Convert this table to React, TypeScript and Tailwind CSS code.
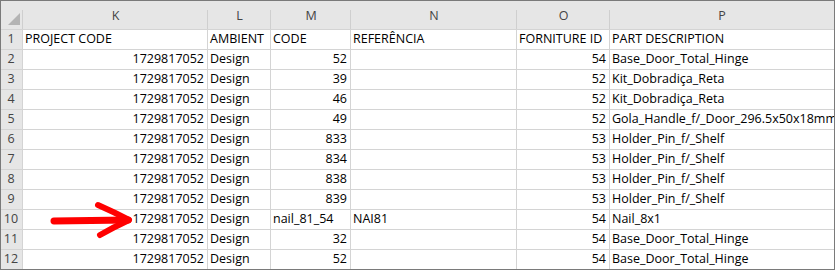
const cols = [
  { letter: "K", w: "w-[185px]", align: "right" },
  { letter: "L", w: "w-[63px]", align: "left" },
  { letter: "M", w: "w-[80px]", align: "right" },
  { letter: "N", w: "w-[166px]", align: "left" },
  { letter: "O", w: "w-[93px]", align: "right" },
  { letter: "P", w: "w-[224px]", align: "left" },
];

const header = ["PROJECT CODE", "AMBIENT", "CODE", "REFERÊNCIA", "FORNITURE ID", "PART DESCRIPTION"];

const rows: (string | { text: string; left: true })[][] = [
  ["1729817052", "Design", "52", "", "54", "Base_Door_Total_Hinge"],
  ["1729817052", "Design", "39", "", "52", "Kit_Dobradiça_Reta"],
  ["1729817052", "Design", "46", "", "52", "Kit_Dobradiça_Reta"],
  ["1729817052", "Design", "49", "", "52", "Gola_Handle_f/_Door_296.5x50x18mm"],
  ["1729817052", "Design", "833", "", "53", "Holder_Pin_f/_Shelf"],
  ["1729817052", "Design", "834", "", "53", "Holder_Pin_f/_Shelf"],
  ["1729817052", "Design", "838", "", "53", "Holder_Pin_f/_Shelf"],
  ["1729817052", "Design", "839", "", "53", "Holder_Pin_f/_Shelf"],
  ["1729817052", "Design", { text: "nail_81_54", left: true }, "NAI81", "54", "Nail_8x1"],
  ["1729817052", "Design", "32", "", "54", "Base_Door_Total_Hinge"],
  ["1729817052", "Design", "52", "", "54", "Base_Door_Total_Hinge"],
];

function Cell({ idx, value, forceLeft, last }: { idx: number; value: string; forceLeft?: boolean; last: boolean }) {
  const col = cols[idx];
  const right = col.align === "right" && !forceLeft;
  return (
    <div
      className={`${col.w} shrink-0 h-full overflow-hidden whitespace-nowrap flex items-center ${
        right ? "justify-end pr-[3px]" : "justify-start pl-[2px]"
      } ${idx < cols.length - 1 ? "border-r border-[#d4d4d4]" : ""} ${last ? "" : ""}`}
    >
      {value}
    </div>
  );
}

export default function App() {
  return (
    <div
      className="relative w-[835px] h-[270px] bg-white border border-[#7a7a7a] overflow-hidden text-[12.5px] text-black"
      style={{ fontFamily: '"Open Sans", "Liberation Sans", sans-serif' }}
    >
      {/* column letters */}
      <div className="flex h-[29px] bg-[#e6e6e6] border-b border-[#d4d4d4] text-[#444]">
        <div className="relative w-[22px] shrink-0 h-full after:absolute after:right-0 after:top-[9px] after:bottom-0 after:w-px after:bg-[#cfcfcf]">
          <svg className="absolute left-[7px] top-[12px]" width="12" height="12" viewBox="0 0 12 12">
            <polygon points="12,0 12,12 0,12" fill="#b4b4b4" />
          </svg>
        </div>
        {cols.map((c, i) => (
          <div
            key={c.letter}
            className={`relative ${c.w} shrink-0 h-full flex items-end justify-center pb-[3px] ${
              i < cols.length - 1
                ? "after:absolute after:right-0 after:top-[9px] after:bottom-0 after:w-px after:bg-[#cfcfcf]"
                : ""
            }`}
          >
            {c.letter}
          </div>
        ))}
      </div>

      {/* header row 1 */}
      <div className="flex h-[20px] border-b border-[#d4d4d4]">
        <div className="w-[22px] shrink-0 h-full bg-[#e6e6e6] border-r border-[#d4d4d4] flex items-center justify-center text-[#444] pr-[1px]">
          1
        </div>
        {header.map((h, i) => (
          <div
            key={h}
            className={`${cols[i].w} shrink-0 h-full overflow-hidden whitespace-nowrap flex items-center pl-[2px] ${
              i < cols.length - 1 ? "border-r border-[#d4d4d4]" : ""
            }`}
          >
            {h}
          </div>
        ))}
      </div>

      {rows.map((r, ri) => {
        const last = ri === rows.length - 1;
        return (
          <div key={ri} className={`flex ${last ? "h-[19px]" : "h-[20px] border-b border-[#d4d4d4]"}`}>
            <div className="w-[22px] shrink-0 h-full bg-[#e6e6e6] border-r border-[#d4d4d4] flex items-center justify-center text-[#444] pr-[1px]">
              {ri + 2}
            </div>
            {r.map((v, ci) =>
              typeof v === "string" ? (
                <Cell key={ci} idx={ci} value={v} last={last} />
              ) : (
                <Cell key={ci} idx={ci} value={v.text} forceLeft last={last} />
              )
            )}
          </div>
        );
      })}

      {/* red arrow annotation */}
      <svg className="absolute left-[39px] top-[194px]" width="100" height="50" viewBox="0 0 100 50">
        <path d="M14 26 L88 25" stroke="#ff0000" strokeWidth="7" strokeLinecap="round" fill="none" />
        <path
          d="M58 10 Q74 17 89 25 Q74 32 60 40"
          stroke="#ff0000"
          strokeWidth="6"
          strokeLinecap="round"
          strokeLinejoin="round"
          fill="none"
        />
      </svg>
    </div>
  );
}
